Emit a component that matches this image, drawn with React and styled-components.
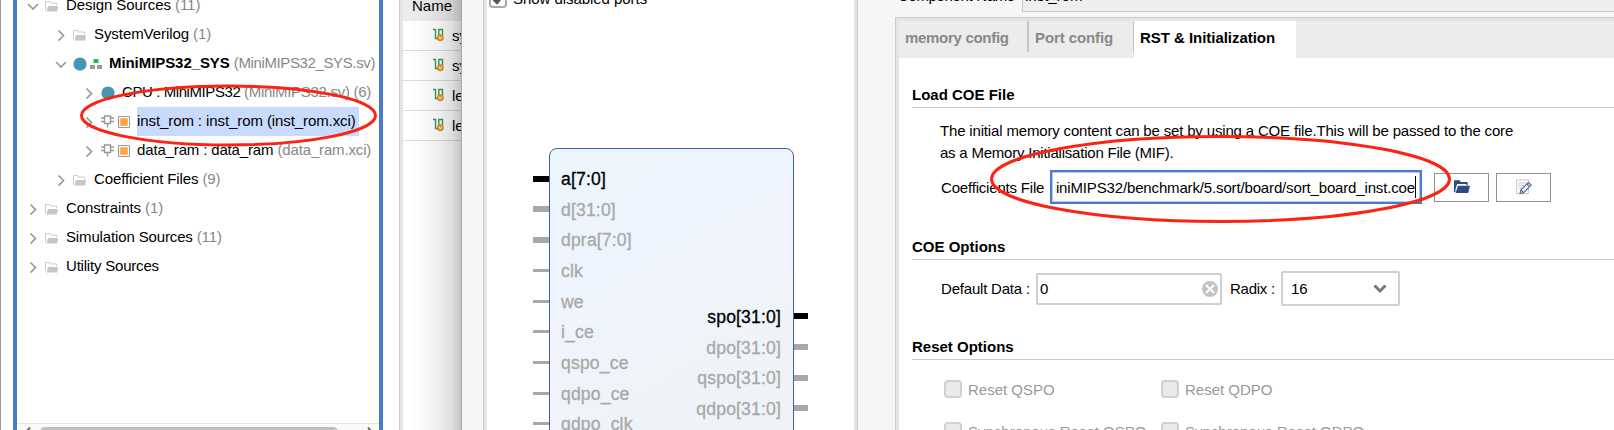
import React from 'react';
import styled, { createGlobalStyle, css } from 'styled-components';

const Global = createGlobalStyle`
  * { box-sizing: border-box; }
  html, body { margin: 0; padding: 0; background: #fff; overflow: hidden; }
  body { font: 15px "Liberation Sans", Arial, sans-serif; color: #000; }
`;

const Screen = styled.div`
  position: relative;
  display: flex;
  width: 1614px;
  height: 430px;
  overflow: hidden;
  background: #fff;
  white-space: pre;
`;

/* ---------- sources tree ---------- */
const SourcesWindow = styled.section`
  flex: none;
  width: 399px;
  padding-left: 12px;
  border-left: 1px solid #999;
`;
const TreeFrame = styled.div`
  display: flex;
  flex-direction: column;
  width: 370px;
  height: 430px;
  border: solid #4a7acd;
  border-width: 0 4px;
`;
const TreeList = styled.div`
  flex: none;
  height: 423px;
  overflow: hidden;
`;
const TreeRow = styled.div`
  display: flex;
  align-items: center;
  height: 29px;
  padding-left: ${(p) => 10 + p.$level * 28}px;
  &:first-child { margin-top: -9px; }
`;
const IconSlot = styled.span`
  flex: none;
  display: flex;
  width: ${(p) => p.$w}px;
  margin-right: ${(p) => p.$gap || 0}px;
`;
const TreeLabel = styled.span`
  height: 29px;
  line-height: 28px;
  letter-spacing: ${(p) => p.$ls || 0}px;
  ${(p) => p.$selected && css`
    background: #c9dbfd;
    width: 222px;
  `}
`;
const Note = styled.span`
  color: ${(p) => (p.$selected ? '#000' : '#888')};
  letter-spacing: ${(p) => p.$ls || 0}px;
`;
const ScrollBar = styled.div`
  display: flex;
  height: 7px;
  padding: 3px 5px 0 7px;
  border-top: 1px solid #e2e2e2;
  background: #fafafa;
`;
const ScrollThumb = styled.div`
  width: 301px;
  height: 12px;
  margin: 0 28px 0 8px;
  border-radius: 5px;
  background: #bfbfbf;
`;

/* ---------- table behind the dialog ---------- */
const TableWindow = styled.section`
  position: relative;
  flex: none;
  width: 62px;
  height: 430px;
  border-left: 1px solid #ccc;
  padding-left: 3px;
  background: linear-gradient(#e5e5e5, #e5e5e5) 0 0 / 3px 100% no-repeat;
  overflow: hidden;
  &::after {
    content: "";
    position: absolute;
    inset: 0 0 0 10px;
    background: linear-gradient(to right, rgba(0,0,0,0), rgba(0,0,0,.025) 30%, rgba(0,0,0,.07) 60%, rgba(0,0,0,.13) 82%, rgba(0,0,0,.23));
  }
`;
const TableHead = styled.div`
  height: 21px;
  padding-left: 9px;
  line-height: 11px;
  background: #ececec;
`;
const TableRow = styled.div`
  display: flex;
  align-items: center;
  gap: 8px;
  height: 30px;
  padding: 0 0 1px 30px;
  border-bottom: 1px solid #dcdcdc;
`;

/* ---------- dialog ---------- */
const Dialog = styled.section`
  display: flex;
  flex: 1;
  height: 430px;
  border-left: 1px solid #a9a9a9;
  background: #f6f6f6;
`;
const SymbolPane = styled.div`
  flex: none;
  width: 375px;
  height: 430px;
  margin-left: 21px;
  border: solid #ccc;
  border-width: 0 1px;
  box-shadow: inset 3px 0 #e4e4e4, inset -3px 0 #e4e4e4;
  background: #fff;
`;
const ShowPorts = styled.div`
  display: flex;
  align-items: flex-start;
  height: 148px;
  padding-left: 5px;
`;
const Box = styled.span`
  flex: none;
  display: flex;
  align-items: center;
  justify-content: center;
  width: 18px;
  height: 18px;
  border: 2px solid ${(p) => (p.$on ? '#a9a9a9' : '#d0d0d0')};
  border-radius: 4px;
  background: ${(p) => (p.$on ? '#fff' : '#e9eaeb')};
`;
const ShowBox = styled(Box)`margin: -10px 6px 0 0;`;
const ShowLabel = styled.span`
  margin-top: -10px;
  line-height: 17px;
  letter-spacing: -.05px;
`;
const SymbolBody = styled.div`
  display: flex;
  justify-content: space-between;
  width: 245px;
  height: 340px;
  margin-left: 65px;
  border: 1px solid #42609c;
  border-radius: 8px;
  background: linear-gradient(150deg, #ecf5fd 0%, #eff4fd 40%, #eff4f8 62%, #eff3f6 100%);
`;
const Ports = styled.div`
  padding-top: ${(p) => p.$top}px;
  margin: ${(p) => (p.$right ? '0 -15px 0 0' : '0 0 0 -17px')};
`;
const Port = styled.div`
  display: flex;
  align-items: center;
  flex-direction: ${(p) => (p.$right ? 'row-reverse' : 'row')};
  gap: ${(p) => (p.$right ? 13 : 12)}px;
  height: 30.67px;
  font-size: 17.6px;
  letter-spacing: .15px;
  color: ${(p) => (p.$on ? '#000' : '#a8a8a8')};
  -webkit-text-stroke: .3px currentColor;
`;
const PortName = styled.span`padding-top: 2px;`;
const Pin = styled.i`
  width: ${(p) => (p.$right ? 14 : 16)}px;
  height: ${(p) => (p.$bus ? 6 : 3)}px;
  background: currentColor;
`;

const ConfigPane = styled.div`
  flex: 1;
  display: flex;
  flex-direction: column;
  padding-left: 37px;
`;
const NameRow = styled.div`
  display: flex;
  height: 17px;
  padding-left: 3px;
`;
const NameLabel = styled.span`
  width: 124px;
  margin-top: -13px;
  line-height: 17px;
  letter-spacing: -.35px;
`;
const NameField = styled.span`
  flex: 1;
  height: 12px;
  padding-left: 2px;
  border: solid #c8c8c8;
  border-width: 0 0 1px 1px;
  background: #eee;
  line-height: 17px;
  & > span { display: block; margin-top: -13px; }
`;
const TabFrame = styled.div`
  flex: 1;
  border: solid #ccc;
  border-width: 1px 0 0 1px;
  padding: 3px 0 0 3px;
  background: #e4e4e4;
`;
const TabContent = styled.div`
  height: 409px;
  background: #fff;
`;
const TabBar = styled.div`
  display: flex;
  height: 37px;
  background: #ececec;
`;
const Tab = styled.div`
  width: ${(p) => p.$w}px;
  height: ${(p) => (p.$active ? 37 : 31)}px;
  padding-left: 6px;
  line-height: 34px;
  font-weight: bold;
  letter-spacing: ${(p) => p.$ls || 0}px;
  color: ${(p) => (p.$active ? '#000' : '#888')};
  background: ${(p) => (p.$active ? '#fff' : 'transparent')};
  border-right: ${(p) => (p.$active ? 0 : p.$sep)}px solid #c4c4c4;
`;
const Section = styled.section`
  height: ${(p) => p.$h}px;
  padding: ${(p) => p.$top || 0}px 0 0 13px;
`;
const SectionTitle = styled.h2`
  height: 27px;
  margin: 0;
  border-bottom: 1px solid #ccc;
  font-size: 15px;
  line-height: 28px;
`;
const Description = styled.p`
  margin: 12px 0 0 28px;
  line-height: 21.5px;
`;
const Line = styled.span`
  display: block;
  letter-spacing: ${(p) => p.$ls}px;
`;
const FieldRow = styled.div`
  display: flex;
  align-items: center;
  margin: ${(p) => p.$top}px 0 0 29px;
  height: 35px;
`;
const FieldLabel = styled.label`
  width: ${(p) => p.$w}px;
  letter-spacing: ${(p) => p.$ls || 0}px;
`;
const PathInput = styled.div`
  display: flex;
  align-items: center;
  justify-content: flex-end;
  width: 372px;
  height: 34px;
  padding: 0 4px 0 3px;
  border: 2px solid #4a7acd;
  box-shadow: inset 0 0 0 1px #b9c9e6;
  background: #fff;
`;
const PathText = styled.span`
  display: flex;
  justify-content: flex-end;
  flex: 1;
  overflow: hidden;
  letter-spacing: -.15px;
`;
const Caret = styled.i`
  flex: none;
  width: 1px;
  height: 22px;
  background: #000;
`;
const IconButton = styled.button`
  display: flex;
  align-items: center;
  justify-content: center;
  width: 55px;
  height: 29px;
  margin: 0 0 0 ${(p) => p.$gap}px;
  padding: 0;
  border: 1px solid #8f8f8f;
  background: #fff;
`;
const ValueBox = styled.div`
  display: flex;
  align-items: center;
  justify-content: space-between;
  width: ${(p) => p.$w}px;
  height: ${(p) => p.$h}px;
  padding: 0 ${(p) => p.$pr}px 0 ${(p) => p.$pl}px;
  margin-right: ${(p) => p.$gap || 0}px;
  border: 2px solid #d0d0d0;
  border-radius: 2px;
  background: #fff;
`;
const CheckGrid = styled.div`
  display: grid;
  grid-template-columns: 217px 217px;
  grid-auto-rows: 42px;
  margin: 8px 0 0 32px;
`;
const Check = styled.label`
  display: flex;
  align-items: center;
  gap: 6px;
  color: #999;
`;

const Annotations = styled.svg`
  position: absolute;
  inset: 0;
  pointer-events: none;
`;

/* ---------- icons ---------- */
const Chevron = ({ open }) => (
  <svg width="12" height="12" viewBox="0 0 12 12" fill="none" stroke="#999" strokeWidth="1.7">
    <path d={open ? 'M1 4l5 5 5-5' : 'M3.5 1.5l5 5-5 5'} />
  </svg>
);
const Folder = () => (
  <svg width="13" height="12" viewBox="0 0 13 12">
    <path d="M.5 10.500V1.500h4l1 1.500h6v2" fill="none" stroke="#ccc" />
    <path d="M3 6h10l-.8 5.500H1.500z" fill="#c6c6c6" />
  </svg>
);
const Dot = () => (
  <svg width="14" height="14" viewBox="0 0 14 14"><circle cx="7" cy="7" r="6.6" fill="#4896ae" /></svg>
);
const Hierarchy = () => (
  <svg width="12" height="10" viewBox="0 0 12 10">
    <path d="M3.500 0h5v4h-5z" fill="#33b257" />
    <path d="M0 6h5v4H0zM7 6h5v4H7z" fill="#999" />
  </svg>
);
const Chip = () => (
  <svg width="13" height="13" viewBox="0 0 13 13" fill="none" stroke="#999" strokeWidth="1.4">
    <path d="M3.500 1h6v7.500h-6zM0 3h3.500M0 6.500h3.500M9.500 3H13M9.500 6.500H13M6.500 8.500V12.500" />
  </svg>
);
const OrangeSquare = () => (
  <svg width="12" height="12" viewBox="0 0 12 12">
    <path d="M.5.5h11v11H.5z" fill="#fff" stroke="#9a9a9a" />
    <path d="M2.200 2.200h7.600v7.600H2.200z" fill="#fda63c" />
  </svg>
);
const NetIcon = () => (
  <svg width="11" height="14" viewBox="0 0 11 14">
    <path d="M0 1.500h2.500v9H6M5.800 8V1.500h3.700v6" fill="none" stroke="#3a9b4f" strokeWidth="1.4" />
    <circle cx="7.300" cy="9.800" r="3.200" fill="#ee9423" stroke="#c9872f" strokeWidth=".6" />
    <path d="M5.900 8.500l1.400 2.600 1.400-2.600" fill="none" stroke="#fff" strokeWidth=".9" />
  </svg>
);
const Arrow = ({ right }) => (
  <svg width="8" height="10" viewBox="0 0 8 10" fill="none" stroke="#666" strokeWidth="2">
    <path d={right ? 'M2 .5l4 4.500-4 4.500' : 'M6 .5L2 5l4 4.500'} />
  </svg>
);
const Tick = () => (
  <svg width="12" height="12" viewBox="0 0 12 12" fill="none" stroke="#555" strokeWidth="3">
    <path d="M1.500 6l3.500 3.500L10.500 3" />
  </svg>
);
const OpenFolder = () => (
  <svg width="16" height="14" viewBox="0 0 16 14">
    <path d="M.7 12V1h4.500l1.300 1.800h6.500v2.400" fill="none" stroke="#2e4a80" strokeWidth="1.4" />
    <path d="M.7 1h4.500l1.300 1.800H13V4H3.200L1 10z" fill="#2e4a80" />
    <path d="M4 5.800h12l-1.800 7.200H1.500z" fill="#2e4a80" />
  </svg>
);
const EditFile = () => (
  <svg width="16" height="16" viewBox="0 0 16 16" fill="none">
    <path d="M.5.8h12v13.700H.5z" fill="#fafafa" stroke="#ccc" />
    <path d="M2.500 4h8M2.500 6.500h6M2.500 9h4" stroke="#ccc" />
    <path d="M4 14.500l.8-3.500 7.700-7.500 2.700 2.500-7.700 7.700zM5 11l2.600 2.600M11 5l2.700 2.600" fill="#fff" stroke="#4a6294" strokeWidth="1.100" />
  </svg>
);
const Clear = () => (
  <svg width="16" height="16" viewBox="0 0 16 16">
    <circle cx="8" cy="8" r="8" fill="#c3c3c3" />
    <path d="M4 4l8 8M12 4l-8 8" stroke="#fff" strokeWidth="2" />
  </svg>
);
const DropArrow = () => (
  <svg width="14" height="10" viewBox="0 0 14 10" fill="none" stroke="#777" strokeWidth="3">
    <path d="M1.500 1.500L7 7l5.500-5.500" />
  </svg>
);

/* ---------- data ---------- */
const rows = [
  { level: 0, open: true, icon: 'folder', text: 'Design Sources', note: '(11)', ls: -0.07 },
  { level: 1, icon: 'folder', text: 'SystemVerilog', note: '(1)', ls: -0.07 },
  { level: 1, open: true, icon: 'top', text: 'MiniMIPS32_SYS', note: '(MiniMIPS32_SYS.sv)', ls: -0.07, noteLs: -0.38 },
  { level: 2, icon: 'dot', text: 'CPU : MiniMIPS32', note: '(MiniMIPS32.sv) (6)', ls: -0.42, noteLs: -0.3 },
  { level: 2, icon: 'ip', text: 'inst_rom : inst_rom', note: '(inst_rom.xci)', ls: -0.09, selected: true },
  { level: 2, icon: 'ip', text: 'data_ram : data_ram', note: '(data_ram.xci)', ls: -0.15 },
  { level: 1, icon: 'folder', text: 'Coefficient Files', note: '(9)', ls: -0.12 },
  { level: 0, icon: 'folder', text: 'Constraints', note: '(1)', ls: -0.08 },
  { level: 0, icon: 'folder', text: 'Simulation Sources', note: '(11)', ls: -0.14 },
  { level: 0, icon: 'folder', text: 'Utility Sources', note: '', ls: -0.2 },
];
const inputs = ['a[7:0]', 'd[31:0]', 'dpra[7:0]', 'clk', 'we', 'i_ce', 'qspo_ce', 'qdpo_ce', 'qdpo_clk'];
const outputs = ['spo[31:0]', 'dpo[31:0]', 'qspo[31:0]', 'qdpo[31:0]'];

function RowIcons({ kind }) {
  if (kind === 'folder') return <IconSlot $w={13} $gap={8}><Folder /></IconSlot>;
  if (kind === 'dot') return <IconSlot $w={14} $gap={7}><Dot /></IconSlot>;
  if (kind === 'top') return (
    <><IconSlot $w={14} $gap={3}><Dot /></IconSlot><IconSlot $w={12} $gap={7}><Hierarchy /></IconSlot></>
  );
  return (
    <><IconSlot $w={13} $gap={4}><Chip /></IconSlot><IconSlot $w={12} $gap={7}><OrangeSquare /></IconSlot></>
  );
}

export default function App() {
  return (
    <Screen>
      <Global />
      <SourcesWindow>
        <TreeFrame>
          <TreeList>
            {rows.map((r) => (
              <TreeRow key={r.text} $level={r.level}>
                <IconSlot $w={13} $gap={5}><Chevron open={r.open} /></IconSlot>
                <RowIcons kind={r.icon} />
                <TreeLabel $selected={r.selected} $ls={r.ls}>
                  {r.icon === 'top' ? <b>{r.text}</b> : r.text}{' '}
                  <Note $selected={r.selected} $ls={r.noteLs || r.ls}>{r.note}</Note>
                </TreeLabel>
              </TreeRow>
            ))}
          </TreeList>
          <ScrollBar><Arrow /><ScrollThumb /><Arrow right /></ScrollBar>
        </TreeFrame>
      </SourcesWindow>

      <TableWindow>
        <TableHead>Name</TableHead>
        {['system', 'sysclk', 'led_r', 'led_g'].map((n) => (
          <TableRow key={n}><IconSlot $w={11}><NetIcon /></IconSlot>{n}</TableRow>
        ))}
      </TableWindow>

      <Dialog>
        <SymbolPane>
          <ShowPorts>
            <ShowBox $on><Tick /></ShowBox>
            <ShowLabel>Show disabled ports</ShowLabel>
          </ShowPorts>
          <SymbolBody>
            <Ports $top={14.2}>
              {inputs.map((n, i) => (
                <Port key={n} $on={i === 0}><Pin $bus={n.includes('[')} /><PortName>{n}</PortName></Port>
              ))}
            </Ports>
            <Ports $right $top={152.1}>
              {outputs.map((n, i) => (
                <Port key={n} $right $on={i === 0}><Pin $right $bus /><PortName>{n}</PortName></Port>
              ))}
            </Ports>
          </SymbolBody>
        </SymbolPane>

        <ConfigPane>
          <NameRow>
            <NameLabel>Component Name</NameLabel>
            <NameField><span>inst_rom</span></NameField>
          </NameRow>
          <TabFrame>
            <TabContent>
              <TabBar>
                <Tab $w={130} $sep={2} $ls={-0.3}>memory config</Tab>
                <Tab $w={105} $sep={1} $ls={-0.1}>Port config</Tab>
                <Tab $w={162} $active $ls={-0.04}>RST &amp; Initialization</Tab>
              </TabBar>
              <Section $h={175} $top={23}>
                <SectionTitle>Load COE File</SectionTitle>
                <Description>
                  <Line $ls={-0.165}>The initial memory content can be set by using a COE file.This will be passed to the core</Line>
                  <Line $ls={-0.22}>as a Memory Initialisation File (MIF).</Line>
                </Description>
                <FieldRow $top={6.5}>
                  <FieldLabel $w={109} $ls={-0.19}>Coefficients File</FieldLabel>
                  <PathInput>
                    <PathText>MiniMIPS32/benchmark/5.sort/board/sort_board_inst.coe</PathText>
                    <Caret />
                  </PathInput>
                  <IconButton $gap={12}><OpenFolder /></IconButton>
                  <IconButton $gap={7}><EditFile /></IconButton>
                </FieldRow>
              </Section>
              <Section $h={100}>
                <SectionTitle>COE Options</SectionTitle>
                <FieldRow $top={11}>
                  <FieldLabel $w={95} $ls={-0.2}>Default Data :</FieldLabel>
                  <ValueBox $w={186} $h={32} $pl={2} $pr={2} $gap={8}>0<Clear /></ValueBox>
                  <FieldLabel $w={51} $ls={-0.25}>Radix :</FieldLabel>
                  <ValueBox $w={119} $h={35} $pl={8} $pr={11}>16<DropArrow /></ValueBox>
                </FieldRow>
              </Section>
              <Section $h={97}>
                <SectionTitle>Reset Options</SectionTitle>
                <CheckGrid>
                  {['Reset QSPO', 'Reset QDPO', 'Synchronous Reset QSPO', 'Synchronous Reset QDPO'].map((n) => (
                    <Check key={n}><Box />{n}</Check>
                  ))}
                </CheckGrid>
              </Section>
            </TabContent>
          </TabFrame>
        </ConfigPane>
      </Dialog>

      <Annotations width="1614" height="430" fill="none" stroke="#fb2413" strokeWidth="3">
        <ellipse cx="228.500" cy="115.500" rx="147" ry="29.500" />
        <ellipse cx="1220.500" cy="179" rx="229" ry="42.500" />
      </Annotations>
    </Screen>
  );
}
